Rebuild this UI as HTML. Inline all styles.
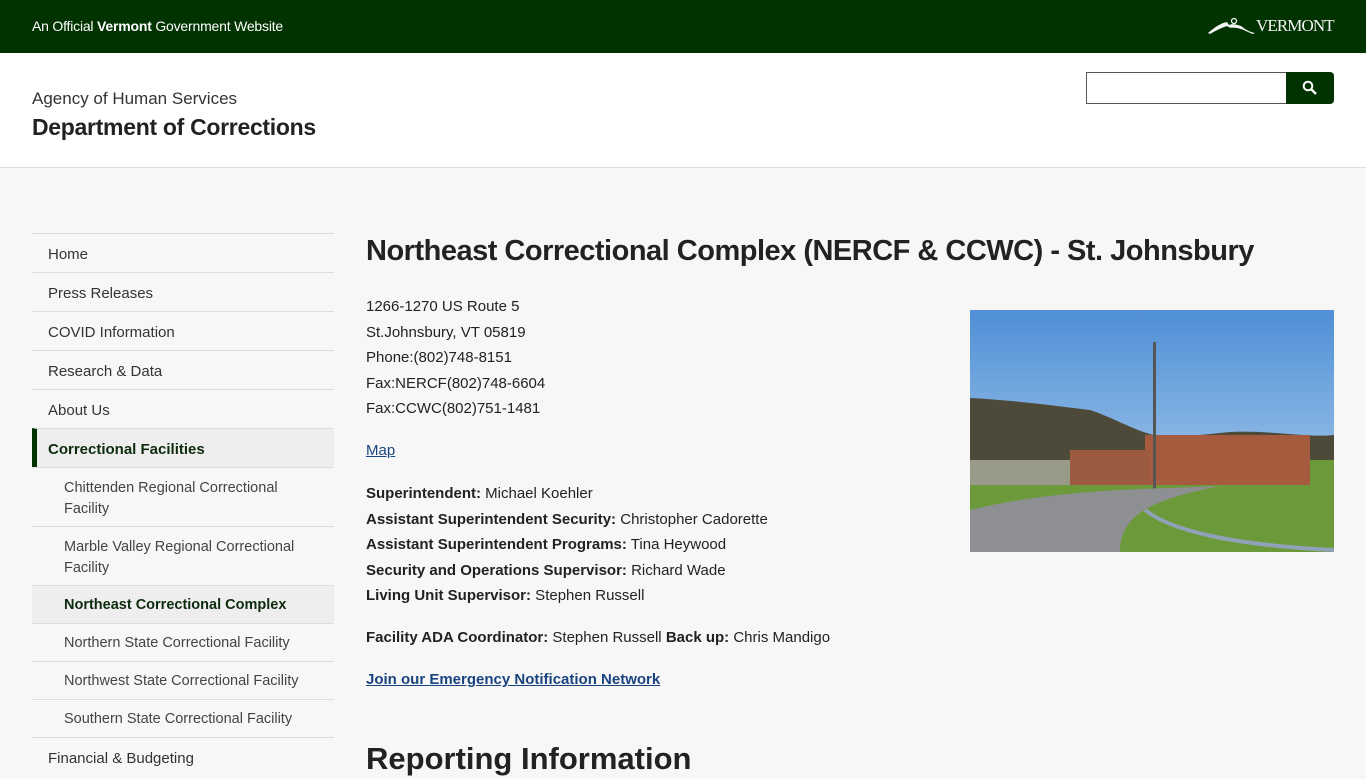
<!DOCTYPE html>
<html><head><meta charset="utf-8"><style>
*{box-sizing:border-box;margin:0;padding:0}
body{width:1366px;height:768px;overflow:hidden;background:#f7f7f7;font-family:"Liberation Sans",sans-serif;color:#222}
.top{height:53px;background:#003300;color:#fff;position:relative}
.top .off{position:absolute;left:32px;top:18px;font-size:14px;letter-spacing:-0.2px}
.top .vt{position:absolute;left:1256px;top:16px;font-family:"Liberation Serif",serif;font-size:17px;letter-spacing:-0.9px;color:#f4f4f4}
.hdr{height:115px;background:#fff;border-bottom:1px solid #ddd;position:relative}
.hdr .a{position:absolute;left:32px;top:36px;font-size:17px;color:#333}
.hdr .d{position:absolute;left:32px;top:61px;font-size:23px;font-weight:bold;color:#222;letter-spacing:-0.3px}
.srch{position:absolute;left:1086px;top:19px;width:201px;height:32px;border:1px solid #555;background:#fff}
.sbtn{position:absolute;left:1286px;top:19px;width:48px;height:32px;background:#003300;border-radius:0 4px 4px 0}
.nav{position:absolute;left:32px;top:233px;width:302px}
.nav div{border-top:1px solid #ddd;font-size:15px;color:#333;padding:0 16px;height:39px;line-height:41px}
.nav .act{background:#eee;font-weight:bold;color:#0d2b0d;border-left:5px solid #003300;padding-left:11px}
.nav .sub{padding-left:32px;color:#444;font-size:14.5px;height:38px;line-height:39px}
.nav .two{height:59px;line-height:21px;padding-top:10px}
.nav .cur{background:#eee;font-weight:bold;color:#0d2b0d}
.main{position:absolute;left:366px;top:235px}
h1{font-size:29px;font-weight:bold;letter-spacing:-0.5px;color:#222;white-space:nowrap}
.p{position:absolute;left:366px;font-size:15px;line-height:25.5px;color:#222;white-space:nowrap}
a{color:#1a4480}
</style></head><body>
<div class="top"><div class="off">An Official <b>Vermont</b> Government Website</div>
<svg style="position:absolute;left:1207px;top:17px" width="50" height="18" viewBox="0 0 50 18"><path d="M1 16 C8 10 14 6 20 5 L22 8 C26 6 30 8 34 9 C38 12 42 15 48 16 L46 17 C40 15 36 12 30 11 C26 10 24 12 20 9 C14 11 8 14 3 17Z" fill="#f4f4f4"/><circle cx="27" cy="4" r="2.5" fill="none" stroke="#f4f4f4" stroke-width="1.3"/></svg>
<div class="vt">VERMONT</div></div>
<div class="hdr"><div class="a">Agency of Human Services</div><div class="d">Department of Corrections</div>
<div class="srch"></div><div class="sbtn"><svg style="position:absolute;left:16px;top:8px" width="16" height="16" viewBox="0 0 16 16"><circle cx="6" cy="6" r="4.3" fill="none" stroke="#fff" stroke-width="2"/><path d="M9 9 L14 14" stroke="#fff" stroke-width="2.4"/></svg></div></div>
<div class="nav">
<div>Home</div><div>Press Releases</div><div>COVID Information</div><div>Research &amp; Data</div><div>About Us</div>
<div class="act">Correctional Facilities</div>
<div class="sub two">Chittenden Regional Correctional<br>Facility</div>
<div class="sub two">Marble Valley Regional Correctional<br>Facility</div>
<div class="sub cur">Northeast Correctional Complex</div>
<div class="sub">Northern State Correctional Facility</div>
<div class="sub">Northwest State Correctional Facility</div>
<div class="sub">Southern State Correctional Facility</div>
<div>Financial &amp; Budgeting</div>
</div>
<div class="main"><h1>Northeast Correctional Complex (NERCF &amp; CCWC) - St. Johnsbury</h1></div>
<div class="p" style="top:294px">1266-1270 US Route 5<br>St.Johnsbury, VT 05819<br>Phone:(802)748-8151<br>Fax:NERCF(802)748-6604<br>Fax:CCWC(802)751-1481</div>
<div class="p" style="top:438px"><a href="#">Map</a></div>
<div class="p" style="top:481px"><b>Superintendent:</b> Michael Koehler<br><b>Assistant Superintendent Security:</b> Christopher Cadorette<br><b>Assistant Superintendent Programs:</b> Tina Heywood<br><b>Security and Operations Supervisor:</b> Richard Wade<br><b>Living Unit Supervisor:</b> Stephen Russell</div>
<div class="p" style="top:625px"><b>Facility ADA Coordinator:</b> Stephen Russell <b>Back up:</b> Chris Mandigo</div>
<div class="p" style="top:667px"><a href="#"><b>Join our Emergency Notification Network</b></a></div>
<div class="p" style="top:739px;font-size:31px;font-weight:bold;line-height:40px">Reporting Information</div>
<svg style="position:absolute;left:970px;top:310px" width="364" height="242" viewBox="0 0 364 242">
<defs><linearGradient id="s" x1="0" y1="0" x2="0" y2="1"><stop offset="0" stop-color="#4f8fd6"/><stop offset="1" stop-color="#b9d6f0"/></linearGradient></defs>
<rect width="364" height="242" fill="url(#s)"/>
<path d="M0 88 C40 90 80 95 120 100 C150 110 170 125 200 128 L260 122 C300 120 340 128 364 125 L364 180 L0 180Z" fill="#4d4a3a"/>
<path d="M0 150 L364 150 L364 242 L0 242Z" fill="#6c9a3a"/>
<rect x="175" y="125" width="165" height="50" fill="#a65a3e"/>
<rect x="100" y="140" width="80" height="35" fill="#9c5a40"/>
<rect x="0" y="150" width="100" height="25" fill="#9a9a8a"/>
<rect x="183" y="32" width="3" height="148" fill="#555"/>
<path d="M0 242 L0 200 C60 185 130 180 200 178 L250 176 C180 190 150 205 150 242Z" fill="#8d8f92"/>
<path d="M175 200 C200 220 260 235 364 240" stroke="#8fa2b8" stroke-width="4" fill="none"/>
</svg>
</body></html>
